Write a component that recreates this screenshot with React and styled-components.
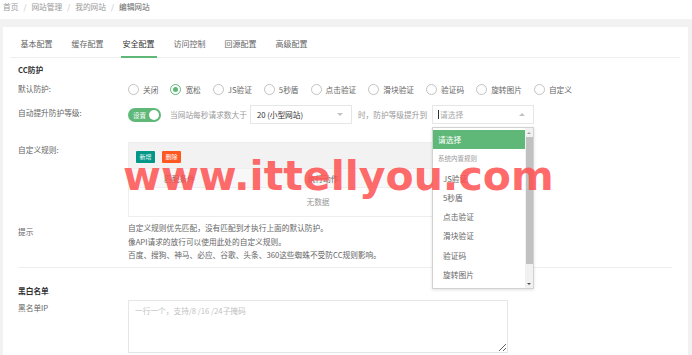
import styled, { createGlobalStyle } from "styled-components";

const GlobalStyle = createGlobalStyle`
  html, body {
    margin: 0;
    padding: 0;
    background: #f2f2f2;
  }
  body {
    font-family: "Noto Sans CJK SC", "Noto Sans", sans-serif;
    font-size: 7.7px;
    color: #666;
  }
  * {
    box-sizing: border-box;
  }
`;

const Page = styled.div`
  position: relative;
  width: 692px;
  height: 355px;
  overflow: hidden;
`;

const Crumbs = styled.div`
  height: 19px;
  background: #fff;
  display: flex;
  align-items: flex-start;
  padding: 0 3px;
  line-height: 13px;
`;

const Crumb = styled.span`
  color: ${(p) => (p.$last ? "#666" : "#999")};
`;

const Sep = styled.span`
  color: #bbb;
  margin: 0 5px;
`;

const Card = styled.div`
  margin: 8px 4px 0 3px;
  background: #fff;
  padding: 4px 8px 0 7px;
  height: 330px;
`;

const Tabs = styled.div`
  display: flex;
  border-bottom: 1px solid #eee;
  padding-left: 1px;
`;

const Tab = styled.div`
  position: relative;
  width: 51px;
  height: 26px;
  line-height: 26px;
  text-align: center;
  font-size: 8px;
  color: ${(p) => (p.$active ? "#333" : "#666")};
  &::after {
    content: "";
    display: ${(p) => (p.$active ? "block" : "none")};
    position: absolute;
    left: 8px;
    right: 7px;
    bottom: -1px;
    height: 2px;
    background: #5fb878;
  }
`;

const Form = styled.div`
  padding: 0 8px;
`;

const SectionTitle = styled.div`
  margin-top: ${(p) => p.$top}px;
  line-height: 12px;
  font-weight: bold;
  color: #333;
`;

const Row = styled.div`
  display: flex;
  align-items: flex-start;
  margin-top: ${(p) => p.$top}px;
`;

const Label = styled.div`
  width: 110px;
  flex: none;
  padding-top: ${(p) => p.$pad || 0}px;
  line-height: ${(p) => p.$lh || 16}px;
  color: #666;
`;

const Inline = styled.div`
  display: flex;
  align-items: center;
  height: ${(p) => p.$h}px;
`;

const RadioItem = styled.div`
  display: flex;
  align-items: center;
  margin-right: 12px;
  color: #666;
`;

const RadioDot = styled.span`
  width: 11px;
  height: 11px;
  border-radius: 50%;
  border: 1px solid ${(p) => (p.$on ? "#5fb878" : "#c2c2c2")};
  margin-right: 4px;
  display: flex;
  align-items: center;
  justify-content: center;
  &::after {
    content: "";
    display: ${(p) => (p.$on ? "block" : "none")};
    width: 5px;
    height: 5px;
    border-radius: 50%;
    background: #5fb878;
  }
`;

const Switch = styled.div`
  width: 33px;
  height: 14px;
  border-radius: 7px;
  background: #5fb878;
  display: flex;
  align-items: center;
  justify-content: space-between;
  padding: 0 2px 0 5px;
  color: #fff;
  font-size: 6.5px;
  margin-right: 9px;
  &::after {
    content: "";
    width: 10px;
    height: 10px;
    border-radius: 50%;
    background: #fff;
  }
`;

const Muted = styled.span`
  color: #999;
  margin-right: ${(p) => p.$mr || 0}px;
`;

const SelectWrap = styled.div`
  position: relative;
  margin-right: 6px;
`;

const SelectBox = styled.div`
  width: 102px;
  height: 19px;
  border: 1px solid #e6e6e6;
  background: #fff;
  display: flex;
  align-items: center;
  padding: 0 8px 0 6px;
  color: ${(p) => (p.$placeholder ? "#aaa" : "#333")};
`;

const Cursor = styled.span`
  width: 1px;
  height: 9px;
  background: #333;
  margin-left: -1px;
  margin-right: 1px;
`;

const Caret = styled.span`
  margin-left: auto;
  width: 0;
  height: 0;
  border-left: 3px solid transparent;
  border-right: 3px solid transparent;
  ${(p) =>
    p.$up
      ? "border-bottom: 3px solid #c2c2c2;"
      : "border-top: 3px solid #c2c2c2;"}
`;

const Dropdown = styled.div`
  position: absolute;
  left: 0;
  top: 22px;
  width: 102px;
  height: 162px;
  background: #fff;
  border: 1px solid #d2d2d2;
  box-shadow: 0 1px 3px rgba(0, 0, 0, 0.12);
  display: flex;
  overflow: hidden;
  z-index: 5;
`;

const OptList = styled.div`
  flex: 1;
  padding-top: 2px;
`;

const Opt = styled.div`
  height: 19.3px;
  line-height: 19.3px;
  padding-left: ${(p) => p.$indent}px;
  white-space: nowrap;
  font-size: ${(p) => (p.$group ? 6.5 : 7.7)}px;
  color: ${(p) => (p.$selected ? "#fff" : p.$group ? "#999" : "#666")};
  background: ${(p) => (p.$selected ? "#5fb878" : "transparent")};
`;

const Scrollbar = styled.div`
  width: 8px;
  flex: none;
  background: #f1f1f1;
  display: flex;
  flex-direction: column;
  align-items: center;
`;

const ScrollArrow = styled.div`
  height: 9px;
  display: flex;
  align-items: center;
  justify-content: center;
  &::after {
    content: "";
    border-left: 2px solid transparent;
    border-right: 2px solid transparent;
    ${(p) =>
      p.$up
        ? "border-bottom: 2px solid #a3a3a3;"
        : "border-top: 2px solid #505050;"}
  }
`;

const Thumb = styled.div`
  width: 7px;
  height: 127px;
  background: #c1c1c1;
`;

const TrackGap = styled.div`
  flex: 1;
`;

const RuleBox = styled.div`
  width: 380px;
  border: 1px solid #eee;
  background: #fff;
`;

const Toolbar = styled.div`
  height: 25px;
  background: #f2f2f2;
  display: flex;
  align-items: center;
  gap: 7px;
  padding-left: 7px;
  padding-top: 2px;
`;

const SmallBtn = styled.span`
  width: 19px;
  height: 12px;
  line-height: 12px;
  border-radius: 1px;
  text-align: center;
  font-size: 6px;
  color: #fff;
  background: ${(p) => p.$bg};
`;

const TableHead = styled.div`
  display: grid;
  grid-template-columns: 101px 186px 1fr;
  height: 20px;
  line-height: 20px;
  background: #f8f8f8;
  border-top: 1px solid #eee;
  border-bottom: 1px solid #eee;
  color: #666;
  text-align: center;
`;

const Empty = styled.div`
  height: 28px;
  line-height: 28px;
  text-align: center;
  color: #999;
`;

const Tips = styled.div`
  line-height: 13.5px;
  color: #666;
`;

const Divider = styled.div`
  height: 1px;
  background: #eee;
  margin-top: 5px;
`;

const TextArea = styled.textarea`
  width: 380px;
  height: 53px;
  border: 1px solid #e6e6e6;
  padding: 3px 6px;
  font-family: inherit;
  font-size: 7.7px;
  color: #333;
  line-height: 13px;
  outline: none;
  &::placeholder {
    color: #c2c2c2;
  }
`;

const Watermark = styled.div`
  position: absolute;
  left: 123px;
  top: 156px;
  font-family: "DejaVu Sans", sans-serif;
  font-weight: bold;
  font-size: 41px;
  line-height: 41px;
  color: rgba(255, 80, 80, 0.85);
  white-space: nowrap;
  pointer-events: none;
  z-index: 10;
`;

const radios = ["关闭", "宽松", "JS验证", "5秒盾", "点击验证", "滑块验证", "验证码", "旋转图片", "自定义"];
const tabs = ["基本配置", "缓存配置", "安全配置", "访问控制", "回源配置", "高级配置"];
const options = ["JS验证", "5秒盾", "点击验证", "滑块验证", "验证码", "旋转图片"];

export default function App() {
  return (
    <Page>
      <GlobalStyle />
      <Crumbs>
        <Crumb>首页</Crumb>
        <Sep>/</Sep>
        <Crumb>网站管理</Crumb>
        <Sep>/</Sep>
        <Crumb>我的网站</Crumb>
        <Sep>/</Sep>
        <Crumb $last>编辑网站</Crumb>
      </Crumbs>
      <Card>
        <Tabs>
          {tabs.map((t, i) => (
            <Tab key={t} $active={i === 2}>
              {t}
            </Tab>
          ))}
        </Tabs>
        <Form>
          <SectionTitle $top={6}>CC防护</SectionTitle>
          <Row $top={6}>
            <Label $lh={14}>默认防护:</Label>
            <Inline $h={14}>
              {radios.map((r, i) => (
                <RadioItem key={r}>
                  <RadioDot $on={i === 1} />
                  {r}
                </RadioItem>
              ))}
            </Inline>
          </Row>
          <Row $top={9}>
            <Label>自动提升防护等级:</Label>
            <Inline $h={19}>
              <Switch>设置</Switch>
              <Muted $mr={3}>当网站每秒请求数大于</Muted>
              <SelectWrap>
                <SelectBox>
                  20 (小型网站)
                  <Caret />
                </SelectBox>
              </SelectWrap>
              <Muted $mr={5}>时，防护等级提升到</Muted>
              <SelectWrap>
                <SelectBox $placeholder>
                  <Cursor />
                  请选择
                  <Caret $up />
                </SelectBox>
                <Dropdown>
                  <OptList>
                    <Opt $indent={5} $selected>
                      请选择
                    </Opt>
                    <Opt $indent={5} $group>
                      系统内置规则
                    </Opt>
                    {options.map((o) => (
                      <Opt key={o} $indent={10}>
                        {o}
                      </Opt>
                    ))}
                  </OptList>
                  <Scrollbar>
                    <ScrollArrow $up />
                    <Thumb />
                    <TrackGap />
                    <ScrollArrow />
                  </Scrollbar>
                </Dropdown>
              </SelectWrap>
            </Inline>
          </Row>
          <Row $top={18}>
            <Label>自定义规则:</Label>
            <RuleBox>
              <Toolbar>
                <SmallBtn $bg="#009688">新增</SmallBtn>
                <SmallBtn $bg="#ff5722">删除</SmallBtn>
              </Toolbar>
              <TableHead>
                <span>匹配条件</span>
                <span>执行动作</span>
                <span />
              </TableHead>
              <Empty>无数据</Empty>
            </RuleBox>
          </Row>
          <Row $top={4}>
            <Label $pad={4} $lh={13.5}>
              提示
            </Label>
            <Tips>
              <div>自定义规则优先匹配，没有匹配到才执行上面的默认防护。</div>
              <div>像API请求的放行可以使用此处的自定义规则。</div>
              <div>百度、搜狗、神马、必应、谷歌、头条、360这些蜘蛛不受防CC规则影响。</div>
            </Tips>
          </Row>
          <Divider />
          <SectionTitle $top={17}>黑白名单</SectionTitle>
          <Row $top={3}>
            <Label>黑名单IP</Label>
            <TextArea placeholder="一行一个，支持/8 /16 /24子掩码" />
          </Row>
        </Form>
      </Card>
      <Watermark>www.ittellyou.com</Watermark>
    </Page>
  );
}
